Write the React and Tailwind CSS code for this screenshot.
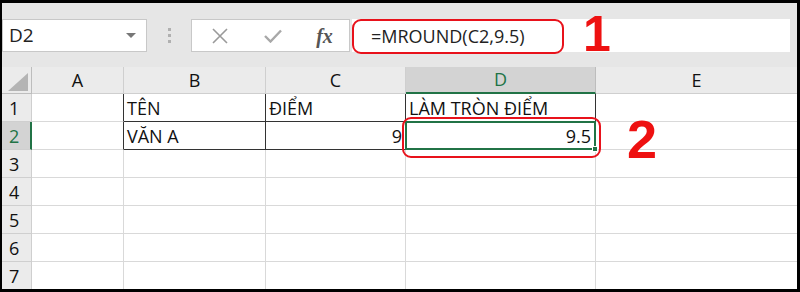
import React from "react";

const font = { fontFamily: '"Open Sans", "Noto Sans", sans-serif' };

function Cell({ className = "", children }) {
  return (
    <div className={"flex items-end pb-[1px] overflow-visible whitespace-nowrap " + className}>
      {children}
    </div>
  );
}

export default function App() {
  const rows = [3, 4, 5, 6, 7];
  return (
    <div
      className="relative w-[800px] h-[292px] bg-black pt-[3px] pl-[2px] pr-[3px] pb-[3px] overflow-hidden"
      style={font}
    >
      <div className="w-full h-full bg-white flex flex-col overflow-hidden">
        {/* toolbar */}
        <div className="h-[64px] bg-[#e6e6e6] flex items-start pt-[16px] pr-[7px] shrink-0">
          <div className="w-[145px] h-[33px] bg-white border border-[#c8c8c8] flex items-center pl-[6px] pr-[10px]">
            <span className="text-[19px] text-[#222] flex-1 leading-none">D2</span>
            <svg width="10" height="6" viewBox="0 0 10 6"><path d="M0 0 L10 0 L5 5 Z" fill="#777" /></svg>
          </div>
          <div className="w-[44px] h-[33px] flex flex-col items-center justify-center gap-[3px]">
            <span className="w-[3px] h-[3px] bg-[#b0b0b0]" />
            <span className="w-[3px] h-[3px] bg-[#b0b0b0]" />
            <span className="w-[3px] h-[3px] bg-[#b0b0b0]" />
          </div>
          <div className="w-[159px] h-[33px] bg-white border border-[#c8c8c8] flex items-center">
            <div className="w-[54px] flex justify-center pl-[2px]">
              <svg width="16" height="16" viewBox="0 0 16 16"><path d="M1 1 L15 15 M15 1 L1 15" stroke="#9a9a9a" strokeWidth="1.6" /></svg>
            </div>
            <div className="w-[54px] flex justify-center">
              <svg width="18" height="14" viewBox="0 0 18 14"><path d="M1 7 L6.5 12.5 L17 1.5" stroke="#a8a8a8" strokeWidth="2.4" fill="none" /></svg>
            </div>
            <div className="flex-1 flex justify-center">
              <span className="italic font-bold text-[#555] text-[20px] leading-none" style={{ fontFamily: '"Liberation Serif", serif' }}>fx</span>
            </div>
          </div>
          <div className="flex-1 ml-[2px] h-[33px] bg-white flex items-center pl-[19px]">
            <span className="text-[18px] text-[#222] leading-none">=MROUND(C2,9.5)</span>
          </div>
        </div>

        {/* grid */}
        <div className="grid grid-cols-[30px_92px_142px_140px_190px_1fr] grid-rows-[27px_28px_28px_28px_28px_28px_28px_28px] text-[#111] text-[18px] leading-[24px]">
          {/* header row */}
          <Cell className="bg-[#ebebeb] border-r border-b border-[#bdbdbd] justify-end pb-[2px] pr-[3px]">
            <svg width="20" height="18" viewBox="0 0 20 18"><path d="M20 0 L20 18 L0 18 Z" fill="#b4b4b4" /></svg>
          </Cell>
          <Cell className="bg-[#ebebeb] border-r border-b border-[#cfcfcf] justify-center">A</Cell>
          <Cell className="bg-[#ebebeb] border-r border-b border-[#cfcfcf] justify-center">B</Cell>
          <Cell className="bg-[#ebebeb] border-r border-b border-[#cfcfcf] justify-center">C</Cell>
          <Cell className="bg-[#d3d3d3] border-r border-b-2 border-r-[#bdbdbd] border-b-[#217346] justify-center text-[#217346]">D</Cell>
          <Cell className="bg-[#ebebeb] border-b border-[#cfcfcf] justify-center">E</Cell>

          {/* row 1 */}
          <Cell className="bg-[#ebebeb] border-r border-b border-[#cfcfcf] pl-[7px]">1</Cell>
          <Cell className="border-r border-b border-r-[#333] border-b-[#d9d9d9]" />
          <Cell className="border-r border-b border-[#333] pl-[3px]">TÊN</Cell>
          <Cell className="border-r border-b border-[#333] pl-[3px]">ĐIỂM</Cell>
          <Cell className="border-r border-b border-[#333] pl-[3px]">LÀM TRÒN ĐIỂM</Cell>
          <Cell className="border-b border-[#d9d9d9]" />

          {/* row 2 */}
          <Cell className="bg-[#d3d3d3] border-r-2 border-b border-r-[#217346] border-b-[#cfcfcf] pl-[7px] text-[#217346]">2</Cell>
          <Cell className="border-r border-b border-r-[#333] border-b-[#d9d9d9]" />
          <Cell className="border-r border-b border-[#333] pl-[3px]">VĂN A</Cell>
          <Cell className="border-r border-b border-[#333] justify-end pr-[3px]">9</Cell>
          <Cell className="relative border-r border-b border-[#333] justify-end pr-[4px]">
            9.5
            <div className="absolute -left-[1px] -top-[1px] -right-[1px] -bottom-[1px] border-2 border-[#217346]" />
            <div className="absolute -right-[3px] -bottom-[3px] w-[6px] h-[6px] bg-[#217346] border border-white" />
          </Cell>
          <Cell className="border-b border-[#d9d9d9]" />

          {rows.map((r) => (
            <React.Fragment key={r}>
              <Cell className="bg-[#ebebeb] border-r border-b border-[#cfcfcf] pl-[7px]">{r}</Cell>
              <Cell className="border-r border-b border-[#d9d9d9]" />
              <Cell className="border-r border-b border-[#d9d9d9]" />
              <Cell className="border-r border-b border-[#d9d9d9]" />
              <Cell className="border-r border-b border-[#d9d9d9]" />
              <Cell className="border-b border-[#d9d9d9]" />
            </React.Fragment>
          ))}
        </div>
      </div>

      {/* annotations */}
      <div className="absolute left-[352px] top-[19px] w-[212px] h-[35px] border-2 border-[#e8121b] rounded-[9px]" />
      <div
        className="absolute left-[583px] top-[9px] text-[#ee1111] font-bold text-[50px] leading-none"
        style={{ fontFamily: '"Liberation Sans", Arial, sans-serif' }}
      >
        1
      </div>
      <div className="absolute left-[402px] top-[117px] w-[199px] h-[41px] border-2 border-[#e8121b] rounded-[9px]" />
      <div
        className="absolute left-[627px] top-[112px] text-[#ee1111] font-bold text-[54px] leading-none"
        style={{ fontFamily: '"Liberation Sans", Arial, sans-serif' }}
      >
        2
      </div>
    </div>
  );
}
